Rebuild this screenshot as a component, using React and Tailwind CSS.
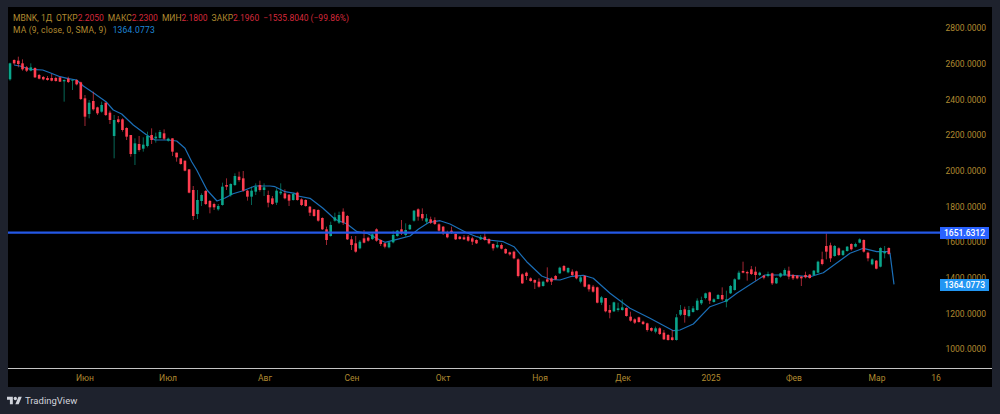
import React from 'react';

// candle rows are [colour, wickTop, bodyTop, bodyBottom, wickBottom], read off 3x crops
const segments = [
  { start: 0, y0: 50, rows: [
    ['g',38,40,88,92],['r',28,30,40,44],['r',20,32,42,52],['r',28,40,58,62],['r',48,52,62,66],['g',40,52,62,64],
    ['r',52,54,82,84],['r',72,75,86,88],['r',78,81,88,91],['r',78,84,90,92],['r',72,84,92,94],['r',80,84,93,95],
    ['r',82,82,95,96],['g',88,90,94,155],['r',80,86,96,99],['g',88,90,92,120],['r',88,90,103,106],['r',95,97,147,150],
    ['r',135,145,200,228],['g',150,158,192,205],['r',125,153,178,182],['r',170,172,190,195],['g',155,165,185,188],['r',158,158,195,198],
    ['r',182,188,210,222],['g',195,210,258,325],['r',198,208,216,220],['r',205,208,240,245],['r',232,234,260,270],['r',255,255,312,320],
    ['g',265,280,312,345],['r',258,282,300,305],['g',262,284,296,305],['g',245,258,288,292],['r',235,255,270,282],['g',248,260,265,278],
    ['g',240,246,264,266],['r',238,250,266,270],['g',263,266,272,275],['r',265,265,305,318],['r',308,308,322,335],
  ]},
  { start: 41, y0: 130, rows: [
    ['r',85,85,102,104],['r',92,92,122,124],['r',118,118,188,190],['r',168,180,258,270],['g',180,210,252,267],['g',190,195,213,228],
    ['r',180,183,222,225],['r',210,213,232,250],['r',218,222,232,240],['g',222,228,238,242],['g',158,170,225,227],['r',145,165,170,180],
    ['g',160,162,195,200],['g',130,138,165,168],['r',125,140,150,155],['r',123,145,182,185],['r',180,182,200,212],['g',170,182,200,225],
    ['g',160,170,185,195],['r',152,165,180,185],['g',160,172,180,198],['r',182,195,218,232],['r',198,205,222,225],['g',175,182,218,225],
    ['g',160,185,190,195],['r',178,190,205,208],['r',192,194,212,228],['g',188,192,210,212],['r',185,188,210,212],['r',205,208,225,228],
    ['r',208,210,228,230],['r',228,230,248,258],['r',238,238,258,260],['r',238,240,272,275],['r',262,264,298,300],['r',290,298,330,345],
    ['g',275,285,318,320],['g',248,262,272,275],['g',245,255,278,282],['r',235,245,278,285],['r',255,258,328,330],['r',318,328,345,360],
    ['r',318,340,365,368],
  ]},
  { start: 84, y0: 190, rows: [
    ['g',150,155,175,178],['r',120,145,158,160],['r',140,143,152,155],['g',130,133,147,150],['r',115,118,152,155],['r',148,150,162,168],
    ['r',158,160,170,175],['g',155,157,172,175],['g',122,135,157,160],['g',120,122,138,140],['r',90,118,130,135],['g',100,120,135,140],
    ['g',102,105,118,120],['g',60,62,92,95],['r',55,58,80,92],['r',55,72,85,92],['g',72,85,95,102],['r',80,88,98,102],
    ['r',82,90,102,105],['r',100,103,122,125],['r',108,110,130,135],['r',122,128,142,145],['r',110,122,128,132],['r',130,132,148,150],
    ['r',138,140,147,149],['r',135,142,148,150],['r',135,140,152,155],['r',140,145,155,165],['r',148,150,160,162],['g',135,142,148,150],
    ['r',125,140,150,152],['r',145,147,160,163],['r',160,162,175,182],['g',155,165,172,175],['r',160,165,176,178],['r',175,177,190,192],
    ['r',185,187,193,197],['r',182,185,205,208],['r',205,208,258,262],['r',250,253,280,282],['r',245,248,258,270],['r',262,265,273,275],
    ['r',268,270,278,297],
  ]},
  { start: 127, y0: 230, rows: [
    ['r',145,155,170,173],['g',152,155,168,170],['r',112,148,155,158],['r',142,145,155,165],['r',135,138,148,150],['g',110,113,130,132],
    ['r',105,108,122,125],['g',112,114,127,130],['r',118,125,135,138],['r',122,124,145,148],['g',138,142,155,160],['r',135,138,170,172],
    ['r',162,164,178,185],['r',165,170,185,188],['r',170,172,218,220],['g',198,202,218,225],['r',204,204,244,247],['r',225,240,248,265],
    ['g',215,217,244,246],['g',218,235,240,245],['g',208,232,240,242],['r',232,234,258,260],['r',245,260,272,275],['r',265,268,278,282],
    ['r',260,262,276,278],['r',272,275,282,285],['r',278,280,300,305],['r',292,294,302,305],['g',290,295,305,310],['r',292,295,312,315],
    ['r',300,308,328,330],['r',312,315,330,332],['r',300,322,330,332],['g',252,262,330,332],['g',225,240,254,258],['r',230,238,255,278],
    ['g',228,240,258,262],['g',228,235,246,248],['g',205,212,240,242],
  ]},
  { start: 166, y0: 220, rows: [
    ['g',230,240,250,255],['g',218,220,234,238],['r',215,217,242,252],['g',235,238,246,248],['g',222,225,237,238],['r',202,225,238,242],
    ['g',212,238,245,262],['g',195,198,220,222],['g',175,178,210,212],['g',152,158,178,180],['r',125,153,158,160],['r',152,156,160,182],
    ['r',138,148,162,165],['r',140,155,165,182],['g',155,158,165,168],['r',165,167,173,178],['g',155,162,168,172],['r',158,160,190,195],
    ['g',172,174,190,192],['g',158,160,170,173],['g',145,150,165,168],['r',140,152,170,178],['r',162,165,175,180],['r',165,167,175,178],
    ['r',168,170,175,198],['r',155,165,172,175],['r',162,164,174,176],['g',150,152,165,168],['g',122,125,158,160],['r',95,118,132,136],
    ['r',40,78,95,118],['r',68,76,115,126],['g',75,78,108,110],['r',82,85,105,108],['g',90,92,105,108],['g',78,80,93,95],
    ['r',70,72,88,92],['g',68,72,80,82],['g',55,58,68,70],['r',58,60,95,98],['r',95,98,115,124],['g',115,118,133,136],
    ['r',120,122,146,148],['g',82,84,140,142],['g',78,95,100,115],['r',82,84,102,104],
  ]},
];

const candles = segments.flatMap(({ start, y0, rows }) =>
  rows.map(([c, wt, bt, bb, wb], k) => ({
    x: 10 + 4.165 * (start + k),
    color: c === 'r' ? '#ff3d50' : '#0aa58b',
    wickTop: y0 + wt / 3,
    bodyTop: y0 + bt / 3,
    bodyBottom: y0 + bb / 3,
    wickBottom: y0 + wb / 3,
  }))
);

const maLine = [
  [14,65],[20,66],[30,69.3],[42.7,70],[50,72.7],[60,76.7],[68.3,78.7],[76.7,80],[83.3,86],[93.3,92.7],[106,101.7],[113.3,110],
  [121.7,114],[133.3,125],[146.7,135],[155,140],[168.3,140],[176.7,141],[185,148.3],[191.7,161.7],[196.7,170],[207,190],
  [217,201],[225,198],[233,193.7],[243,190.7],[255,186],[270,186],[275,186.7],[285,191.7],[295,193.3],[298,196],[310,198.3],
  [323,208.3],[335,219.3],[347,224],[357,231.7],[367,233.3],[380,240],[385,242.3],[397,239.3],[410,236],[418.3,229.3],[428.3,222.7],
  [440,220.7],[450,224],[466.7,232.7],[476.7,236.7],[488.3,240],[503.3,241.7],[514,246.7],[526.7,261.7],[541.7,276],[550,279.3],
  [560,280],[571.7,276.3],[583.3,275.3],[593.3,278.3],[610,293.3],[630,308.3],[650,318.3],[673.3,330.7],[680,330],[693.3,324],
  [710,306.7],[726.7,300.7],[736.7,293.3],[765,275],[786.7,275],[810,276.7],[823.3,272.7],[850,253.3],[863.3,248.3],[876.7,251.7],
  [888.3,251.7],[890,253.3],[894,284.3],
].map(p => p.join(',')).join(' ');

const prices = ['2800.0000','2600.0000','2400.0000','2200.0000','2000.0000','1800.0000','1600.0000','1400.0000','1200.0000','1000.0000'];

// gap is the distance from the previous label's tick, in px
const timeLabels = [
  { label: 'Июн', gap: 77 },
  { label: 'Июл', gap: 83 },
  { label: 'Авг', gap: 97 },
  { label: 'Сен', gap: 87 },
  { label: 'Окт', gap: 91 },
  { label: 'Ноя', gap: 97 },
  { label: 'Дек', gap: 83 },
  { label: '2025', gap: 88 },
  { label: 'Фев', gap: 83 },
  { label: 'Мар', gap: 83 },
  { label: '16', gap: 59 },
];

const Value = ({ name, value }) => (
  <span>
    {name}
    <span className="text-[#d5293b]">{value}</span>
  </span>
);

const PriceTag = ({ className, children }) => (
  <div className={`absolute left-0 w-[49px] h-[12px] flex items-center justify-center text-white text-[8.5px] font-medium ${className}`}>
    {children}
  </div>
);

export default function App() {
  return (
    <div className="w-[1000px] h-[414px] bg-[#1e222d] flex flex-col pt-[7px] px-2 overflow-hidden font-['Roboto',sans-serif]">
      {/* Chart panel */}
      <div className="h-[380px] bg-black flex flex-col">
        <div className="h-[361px] flex relative">
          <div className="absolute left-[5px] top-[5px] z-10 text-[8.5px] leading-[12px] text-[#b08a30]">
            <div className="flex gap-[4px]">
              <span>MBNK, 1Д</span>
              <Value name="ОТКР" value="2.2050" />
              <Value name="МАКС" value="2.2300" />
              <Value name="МИН" value="2.1800" />
              <Value name="ЗАКР" value="2.1960" />
              <span className="text-[#d5293b]">−1535.8040 (−99.86%)</span>
            </div>
            <div className="flex gap-[6px] tracking-[0.2px]">
              <span>MA (9, close, 0, SMA, 9)</span>
              <span className="text-[#1f87d8]">1364.0773</span>
            </div>
          </div>

          <svg className="w-[932px] h-[361px]" viewBox="8 7 932 361">
            <polyline points={maLine} fill="none" stroke="#1b6fb8" strokeWidth="1.2" strokeLinejoin="round" />
            {candles.map((c, i) => (
              <g key={i}>
                <line x1={c.x} x2={c.x} y1={c.wickTop} y2={c.wickBottom} stroke={c.color} strokeWidth="0.8" opacity="0.8" />
                <rect x={c.x - 1.3} y={c.bodyTop} width="2.6" height={c.bodyBottom - c.bodyTop} fill={c.color} />
              </g>
            ))}
            <line x1="8" x2="940" y1="232.7" y2="232.7" stroke="#2458e6" strokeWidth="2.2" />
          </svg>

          {/* Price axis */}
          <div className="w-[52px] relative flex flex-col pt-[4px] text-[8.5px] text-[#b08a30]">
            {prices.map((p) => (
              <div key={p} className="h-[35.67px] flex items-center justify-end pr-[6px]">{p}</div>
            ))}
            <PriceTag className="top-[220px] bg-[#2962ff]">1651.6312</PriceTag>
            <PriceTag className="top-[272px] bg-[#2196f3]">1364.0773</PriceTag>
          </div>
        </div>

        {/* Time axis */}
        <div className="h-[19px] border-t border-[#c4c4c4] flex items-center text-[8.5px] text-[#b08a30]">
          {timeLabels.map((t) => (
            <div key={t.label} className="w-0 flex justify-center shrink-0" style={{ marginLeft: t.gap }}>{t.label}</div>
          ))}
        </div>
      </div>

      {/* Footer */}
      <div className="flex-1 flex items-center gap-[3px] -ml-px pt-[1px]">
        <svg className="w-[15px] h-[12px]" viewBox="0 0 36 28" fill="#d1d4dc">
          <path d="M14 22H7V11H0V4h14v18zM28 22h-8l7.5-18h8L28 22z" />
          <circle cx="20" cy="8" r="4" />
        </svg>
        <span className="text-[9.5px] text-[#d1d4dc]">TradingView</span>
      </div>
    </div>
  );
}
